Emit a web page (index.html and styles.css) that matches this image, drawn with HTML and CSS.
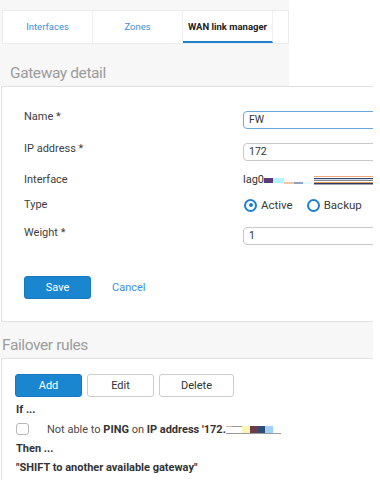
FILE: index.html
```html
<!DOCTYPE html>
<html lang="en">
<head>
<meta charset="utf-8">
<title>WAN link manager</title>
<link rel="stylesheet" href="styles.css">
</head>
<body>
<div class="page">
  <div class="top">
    <nav class="tabs">
      <a class="tab">Interfaces</a>
      <a class="tab">Zones</a>
      <a class="tab tab-active">WAN link manager</a>
    </nav>
    <h2 class="section-title">Gateway detail</h2>
  </div>

  <section class="panel gateway">
    <div class="form">
      <div class="field field-name">
        <label class="label">Name *</label>
        <div class="input input-focus">FW</div>
      </div>
      <div class="field field-ip">
        <label class="label">IP address *</label>
        <div class="input">172</div>
      </div>
      <div class="field field-iface">
        <label class="label">Interface</label>
        <div class="value">lag0<span class="redact r-purple"></span><span class="redact r-cyan"></span><span class="redact low r-peach"></span><span class="redact low r-slate"></span><span class="redact low r-ice"></span><span class="stripes"></span></div>
      </div>
      <div class="field field-type">
        <label class="label">Type</label>
        <div class="radios">
          <span class="radio radio-on"></span><span class="radio-text">Active</span>
          <span class="radio"></span><span class="radio-text">Backup</span>
        </div>
      </div>
      <div class="field field-weight">
        <label class="label">Weight *</label>
        <div class="input">1</div>
      </div>
    </div>
    <div class="actions">
      <button class="btn btn-primary btn-save">Save</button>
      <button class="link-btn">Cancel</button>
    </div>
  </section>

  <div class="band">
    <h2 class="section-title">Failover rules</h2>
  </div>

  <section class="panel rules">
    <div class="toolbar">
      <button class="btn btn-primary">Add</button>
      <button class="btn btn-default">Edit</button>
      <button class="btn btn-default btn-wide">Delete</button>
    </div>
    <p class="rule-head">If ...</p>
    <div class="rule-row">
      <span class="checkbox"></span>
      <span class="rule-text">Not able to <b>PING</b> on <b>IP address '172.</b><span class="ip-redact"><i class="b1"></i><i class="b2"></i><i class="b3"></i><i class="b4"></i><i class="b5"></i><i class="b6"></i><i class="b7"></i></span></span>
    </div>
    <p class="rule-head then">Then ...</p>
    <p class="rule-head action">"SHIFT to another available gateway"</p>
  </section>
</div>
</body>
</html>
```

FILE: styles.css
```css
* { box-sizing: border-box; }

html, body {
  margin: 0;
  padding: 0;
  background: #ffffff;
}

body {
  font-family: Roboto, "Noto Sans", sans-serif;
  color: #3b3b3b;
  font-size: 11px;
}

.page {
  width: 373px;
  height: 480px;
  overflow: hidden;
}

/* top area */
.top {
  width: 289px;
  height: 86px;
  background: #f7f7f7;
  padding-top: 10px;
}

.tabs {
  display: flex;
  margin-left: 2px;
  height: 34px;
  background: #ffffff;
  border: 1px solid #ececec;
}

.tab {
  width: 90px;
  display: flex;
  align-items: center;
  justify-content: center;
  font-size: 9.5px;
  color: #3d8fdc;
  border-right: 1px solid #efefef;
  padding-bottom: 1px;
}

.tab-active {
  color: #222;
  font-weight: 700;
  border-bottom: 2px solid #1d80d0;
  padding-bottom: 0;
}

.section-title {
  margin: 0;
  padding: 19px 0 0 10px;
  font-size: 15.5px;
  line-height: 20px;
  font-weight: 400;
  color: #9c9c9c;
  letter-spacing: -0.4px;
}

/* panels */
.panel {
  margin-left: 1px;
  background: #ffffff;
  border: 1px solid #e2e2e2;
  border-right: none;
}

.gateway {
  height: 236px;
  padding: 24px 0 0 22px;
}

.form {
  display: flex;
  flex-direction: column;
}

.field {
  display: flex;
  align-items: flex-start;
  height: 18px;
}

.field-ip { margin-top: 14px; }
.field-iface { margin-top: 10px; align-items: center; }
.field-type { margin-top: 7px; align-items: center; }
.field-weight { margin-top: 13px; }

.label {
  width: 219px;
  flex: none;
  line-height: 12px;
  color: #3e3e3e;
}

.field-iface .label,
.field-type .label {
  line-height: 18px;
}

.input {
  flex: none;
  width: 160px;
  height: 18px;
  border: 1px solid #c9c9c9;
  border-radius: 4px;
  padding: 0 5px;
  line-height: 16px;
  font-size: 10.5px;
  color: #333;
}

.input-focus {
  border: 1.5px solid #6aa8dc;
  line-height: 15px;
}

.value {
  display: flex;
  align-items: center;
  color: #333;
  font-size: 11px;
  line-height: 18px;
}

.redact {
  display: inline-block;
  height: 4px;
  width: 10px;
}
.redact.low { margin-top: 6px; height: 2px; }
.r-purple { background: #5b3a7a; width: 9px; height: 5px; }
.r-cyan { background: #b6f3fb; width: 11px; height: 5px; }
.r-peach { background: #f2c7a0; }
.r-slate { background: #8fa3c2; width: 9px; }
.r-ice { background: #e2f6fb; width: 11px; }

.stripes {
  display: inline-block;
  width: 60px;
  height: 9px;
  background: linear-gradient(to bottom,
    #e8a870 0, #e8a870 1px,
    #ffffff 1px, #ffffff 2px,
    #324a75 2px, #324a75 3px,
    #d5dae2 3px, #d5dae2 4px,
    #7d8796 4px, #7d8796 5px,
    #ffffff 5px, #ffffff 6px,
    #e39a55 6px, #e39a55 7px,
    #2d3f64 7px, #2d3f64 8px,
    #9aa4b4 8px, #9aa4b4 9px);
}

.radios {
  display: flex;
  align-items: center;
  padding-left: 1px;
}

.radio {
  width: 13px;
  height: 13px;
  border: 2px solid #1d80d0;
  border-radius: 50%;
  position: relative;
  flex: none;
}

.radio-on::after {
  content: "";
  position: absolute;
  left: 2.5px;
  top: 2.5px;
  width: 4px;
  height: 4px;
  border-radius: 50%;
  background: #1d80d0;
}

.radio-text {
  margin-left: 4px;
  margin-right: 14px;
  font-size: 11.5px;
  color: #3b3b3b;
}

.actions {
  display: flex;
  align-items: center;
  margin-top: 31px;
}

.btn {
  height: 23px;
  width: 67px;
  border-radius: 3px;
  font-family: Roboto, "Noto Sans", sans-serif;
  font-size: 11px;
  padding: 0;
  cursor: pointer;
}

.btn-primary {
  background: #1b86d0;
  border: 1px solid #1778bd;
  color: #ffffff;
}

.btn-default {
  background: #ffffff;
  border: 1px solid #cdcdcd;
  color: #333;
}

.btn-wide { width: 75px; }

.link-btn {
  margin-left: 21px;
  background: none;
  border: none;
  padding: 0;
  font-family: Roboto, "Noto Sans", sans-serif;
  font-size: 11px;
  color: #3a8fdc;
}

/* band */
.band {
  height: 36px;
  background: #f7f7f7;
}

.band .section-title {
  padding: 13px 0 0 2px;
}

/* rules panel */
.rules {
  height: 130px;
  padding: 15px 0 0 13px;
}

.toolbar {
  display: flex;
  gap: 5px;
}

.rule-head {
  margin: 6px 0 0 1px;
  font-weight: 700;
  font-size: 11px;
  line-height: 14px;
  color: #333;
}

.rule-head.then { margin-top: 6px; }
.rule-head.action { margin-top: 5px; }

.rule-row {
  display: flex;
  align-items: center;
  margin-top: 5px;
  height: 14px;
  padding-left: 1px;
}

.checkbox {
  width: 13px;
  height: 12px;
  border: 1px solid #b8b8b8;
  border-radius: 3px;
  flex: none;
  margin-right: 18px;
}

.rule-text {
  display: flex;
  align-items: center;
  white-space: pre;
  color: #4a4a4a;
}

.rule-text b {
  color: #333;
}

.ip-redact {
  display: inline-flex;
  align-items: center;
  height: 8px;
  border-bottom: 1px solid #9a9a9a;
  margin-top: 2px;
}

.ip-redact i {
  display: inline-block;
  height: 7px;
}
.ip-redact .b1 { width: 6px; height: 1px; background: #e0b090; align-self: flex-start; }
.ip-redact .b2 { width: 10px; background: #ffffff; border-top: 1px solid #999; }
.ip-redact .b3 { width: 8px; background: #fbf5b4; }
.ip-redact .b4 { width: 8px; background: #6e3b4a; }
.ip-redact .b5 { width: 7px; background: #2f4c74; }
.ip-redact .b6 { width: 8px; background: #9fd1f5; }
.ip-redact .b7 { width: 8px; background: transparent; }
```
